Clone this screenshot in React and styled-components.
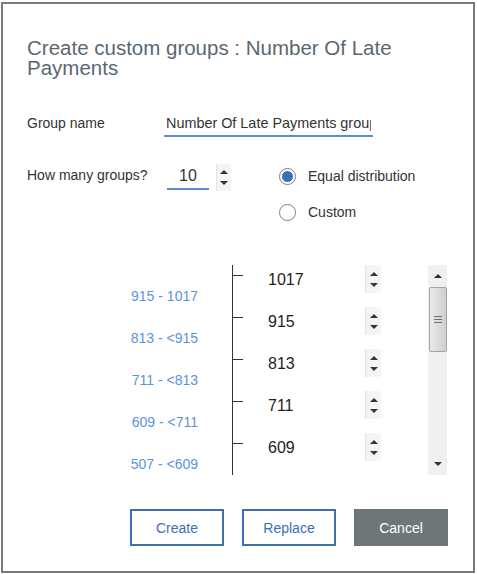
import React from 'react';
import styled, { createGlobalStyle } from 'styled-components';

const GlobalStyle = createGlobalStyle`
  body {
    margin: 0;
    background: #fff;
    font-family: "Liberation Sans", Arial, sans-serif;
  }
`;

const groups = [1017, 915, 813, 711, 609, 507, 405, 303, 201, 99];

function App() {
  return (
    <>
      <GlobalStyle />
      <Dialog>
        <Title>Create custom groups : Number Of Late Payments</Title>

        <FieldRow $top={33}>
          <Label>Group name</Label>
          <TextInput readOnly value="Number Of Late Payments group" />
        </FieldRow>

        <FieldRow $top={26}>
          <Label>How many groups?</Label>
          <NumberInput readOnly value="10" />
          <Spinner $big>
            <ArrowUp />
            <ArrowDown />
          </Spinner>
          <RadioGroup>
            <RadioOption>
              <RadioCircle $checked />
              <RadioText>Equal distribution</RadioText>
            </RadioOption>
            <RadioOption>
              <RadioCircle />
              <RadioText>Custom</RadioText>
            </RadioOption>
          </RadioGroup>
        </FieldRow>

        <ScrollSection>
          <GroupList>
            {groups.map((v, i) => (
              <GroupRow key={v}>
                <RangeLabel>
                  {i + 1 < groups.length
                    ? (i === 0 ? `${groups[i + 1]} - ${v}` : `${groups[i + 1]} - <${v}`)
                    : ''}
                </RangeLabel>
                <Axis>
                  <Tick />
                </Axis>
                <Value>{v}</Value>
                <RowSpinner>
                  <ArrowUp />
                  <ArrowDown />
                </RowSpinner>
              </GroupRow>
            ))}
          </GroupList>
          <ScrollTrack>
            <ScrollBtn>
              <ArrowUp />
            </ScrollBtn>
            <Thumb>
              <Grip />
              <Grip />
              <Grip />
            </Thumb>
            <TrackFill />
            <ScrollBtn>
              <ArrowDown />
            </ScrollBtn>
          </ScrollTrack>
        </ScrollSection>

        <ButtonRow>
          <Button>Create</Button>
          <Button>Replace</Button>
          <Button $secondary>Cancel</Button>
        </ButtonRow>
      </Dialog>
    </>
  );
}

const Dialog = styled.div`
  box-sizing: border-box;
  width: 474px;
  height: 571px;
  margin: 2px 0 0 1px;
  border: 2px solid #7b7b7b;
  padding: 34px 25px 0 24px;
  display: flex;
  flex-direction: column;
  background: #fff;
`;

const Title = styled.h1`
  margin: 0;
  font-size: 20.5px;
  line-height: 20px;
  font-weight: 400;
  color: #5a6872;
`;

const FieldRow = styled.div`
  display: flex;
  align-items: flex-start;
  margin-top: ${p => p.$top}px;
`;

const Label = styled.div`
  width: 137px;
  flex-shrink: 0;
  font-size: 14px;
  line-height: 24px;
  color: #333;
`;

const TextInput = styled.input`
  box-sizing: border-box;
  width: 209px;
  height: 26px;
  padding: 0 2px;
  border: none;
  border-bottom: 2px solid #5b8bd0;
  outline: none;
  font-family: inherit;
  font-size: 14.4px;
  color: #333;
  background: transparent;
`;

const NumberInput = styled.input`
  box-sizing: border-box;
  width: 42px;
  height: 27px;
  margin-left: 3px;
  padding: 0;
  border: none;
  border-bottom: 2px solid #5b8bd0;
  outline: none;
  text-align: center;
  font-family: inherit;
  font-size: 16px;
  color: #333;
  background: transparent;
`;

const Spinner = styled.div`
  box-sizing: border-box;
  width: ${p => (p.$big ? 15 : 16)}px;
  height: ${p => (p.$big ? 27 : 28)}px;
  margin-left: ${p => (p.$big ? 7 : 0)}px;
  margin-top: ${p => (p.$big ? 1 : 0)}px;
  display: flex;
  flex-direction: column;
  justify-content: space-around;
  align-items: center;
  padding: 3px 0;
  background: #f4f4f4;
  border-left: 1px solid #e4e4e4;
  border-radius: 0 3px 3px 0;
  flex-shrink: 0;
`;

const RowSpinner = styled(Spinner)`
  grid-column: 5;
`;

const ArrowUp = styled.span`
  width: 0;
  height: 0;
  border-left: 4px solid transparent;
  border-right: 4px solid transparent;
  border-bottom: 4px solid #333;
`;

const ArrowDown = styled.span`
  width: 0;
  height: 0;
  border-left: 4px solid transparent;
  border-right: 4px solid transparent;
  border-top: 4px solid #333;
`;

const RadioGroup = styled.div`
  display: flex;
  flex-direction: column;
  gap: 16px;
  margin-left: 48px;
  padding-top: 3px;
`;

const RadioOption = styled.label`
  display: flex;
  align-items: center;
  height: 20px;
`;

const RadioCircle = styled.span`
  box-sizing: border-box;
  width: 17px;
  height: 17px;
  border-radius: 50%;
  border: 1px solid #7d7d7d;
  display: flex;
  align-items: center;
  justify-content: center;
  &::after {
    content: '';
    display: ${p => (p.$checked ? 'block' : 'none')};
    width: 11px;
    height: 11px;
    border-radius: 50%;
    background: #3d70b2;
  }
`;

const RadioText = styled.span`
  margin-left: 12px;
  font-size: 14px;
  color: #333;
`;

const ScrollSection = styled.div`
  display: flex;
  margin-top: 43px;
  margin-left: 73px;
  height: 210px;
`;

const GroupList = styled.div`
  width: 328px;
  height: 210px;
  overflow: hidden;
`;

const GroupRow = styled.div`
  display: grid;
  grid-template-columns: 98px 34px 36px 97px 16px;
  height: 42px;
  align-items: start;
`;

const RangeLabel = styled.div`
  grid-column: 1;
  text-align: right;
  padding-top: 23px;
  font-size: 14px;
  line-height: 16px;
  color: #5b93db;
  white-space: nowrap;
`;

const Axis = styled.div`
  grid-column: 3;
  height: 42px;
  border-left: 1px solid #333;
  position: relative;
`;

const Tick = styled.div`
  position: absolute;
  left: 0;
  top: 10px;
  width: 10px;
  height: 1px;
  background: #333;
`;

const Value = styled.div`
  grid-column: 4;
  padding-top: 5px;
  font-size: 16px;
  line-height: 20px;
  color: #222;
`;

const ScrollTrack = styled.div`
  width: 19px;
  height: 210px;
  display: flex;
  flex-direction: column;
  background: #f0f0f0;
`;

const ScrollBtn = styled.div`
  height: 22px;
  display: flex;
  align-items: center;
  justify-content: center;
  flex-shrink: 0;
`;

const Thumb = styled.div`
  box-sizing: border-box;
  height: 65px;
  margin: 0 0 0 1px;
  border: 1px solid #a3a3a3;
  border-radius: 2px;
  background: linear-gradient(to right, #eaeaea, #d9d9d9 60%, #cfcfcf);
  display: flex;
  flex-direction: column;
  align-items: center;
  justify-content: center;
  gap: 2px;
  flex-shrink: 0;
`;

const Grip = styled.span`
  width: 8px;
  height: 1px;
  background: #6f6f6f;
`;

const TrackFill = styled.div`
  flex: 1;
`;

const ButtonRow = styled.div`
  display: flex;
  justify-content: flex-end;
  gap: 18px;
  margin-top: 34px;
`;

const Button = styled.button`
  box-sizing: border-box;
  width: 94px;
  height: 37px;
  padding: 0;
  border: 2px solid ${p => (p.$secondary ? '#6d7777' : '#3d70b2')};
  background: ${p => (p.$secondary ? '#6d7777' : '#fff')};
  color: ${p => (p.$secondary ? '#fff' : '#3d70b2')};
  font-family: inherit;
  font-size: 14px;
  cursor: pointer;
`;

export default App;
